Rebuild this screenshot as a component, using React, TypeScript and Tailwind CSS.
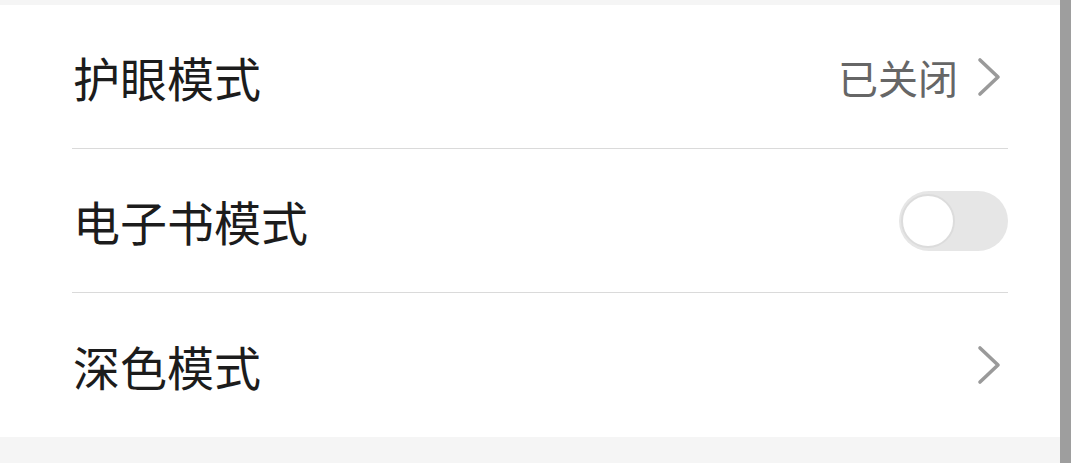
import React from 'react';

const font = { fontFamily: '"Noto Sans CJK SC", "Noto Sans", sans-serif' };

function Chevron() {
  return (
    <svg width="26" height="40" viewBox="0 0 26 40" className="shrink-0">
      <path d="M4 3 L22 20 L4 37" fill="none" stroke="#9a9a9a" strokeWidth="3.6" strokeLinecap="round" strokeLinejoin="round" />
    </svg>
  );
}

function Toggle() {
  return (
    <div className="w-[109px] h-[60px] rounded-full bg-[#e6e6e6] flex items-center px-[2px]">
      <div className="w-[54px] h-[54px] rounded-full bg-white border-[2px] border-[#dcdcdc]" />
    </div>
  );
}

function Row({ label, right, divider }: { label: string; right: React.ReactNode; divider?: boolean }) {
  return (
    <div className="pl-[72px] pr-[52px]">
      <div className={`h-[144px] flex items-center justify-between ${divider ? 'border-b border-[#dadada]' : ''}`}>
        <span className="text-[47px] leading-none text-[#1c1c1c] pl-[1px]">{label}</span>
        {right}
      </div>
    </div>
  );
}

export default function App() {
  return (
    <div className="w-[1080px] h-[463px] flex bg-white overflow-hidden" style={font}>
      <div className="w-[1060px] flex flex-col">
        <div className="h-[5px] bg-[#f5f5f5]" />
        <Row
          label="护眼模式"
          divider
          right={
            <div className="flex items-center gap-[18px] pr-[6px]">
              <span className="text-[40px] leading-none text-[#666666]">已关闭</span>
              <Chevron />
            </div>
          }
        />
        <Row label="电子书模式" divider right={<Toggle />} />
        <Row
          label="深色模式"
          right={
            <div className="pr-[6px]">
              <Chevron />
            </div>
          }
        />
        <div className="flex-1 bg-[#f5f5f5]" />
      </div>
      <div className="w-[11px] bg-[#9e9e9e]" />
      <div className="flex-1 bg-white" />
    </div>
  );
}
